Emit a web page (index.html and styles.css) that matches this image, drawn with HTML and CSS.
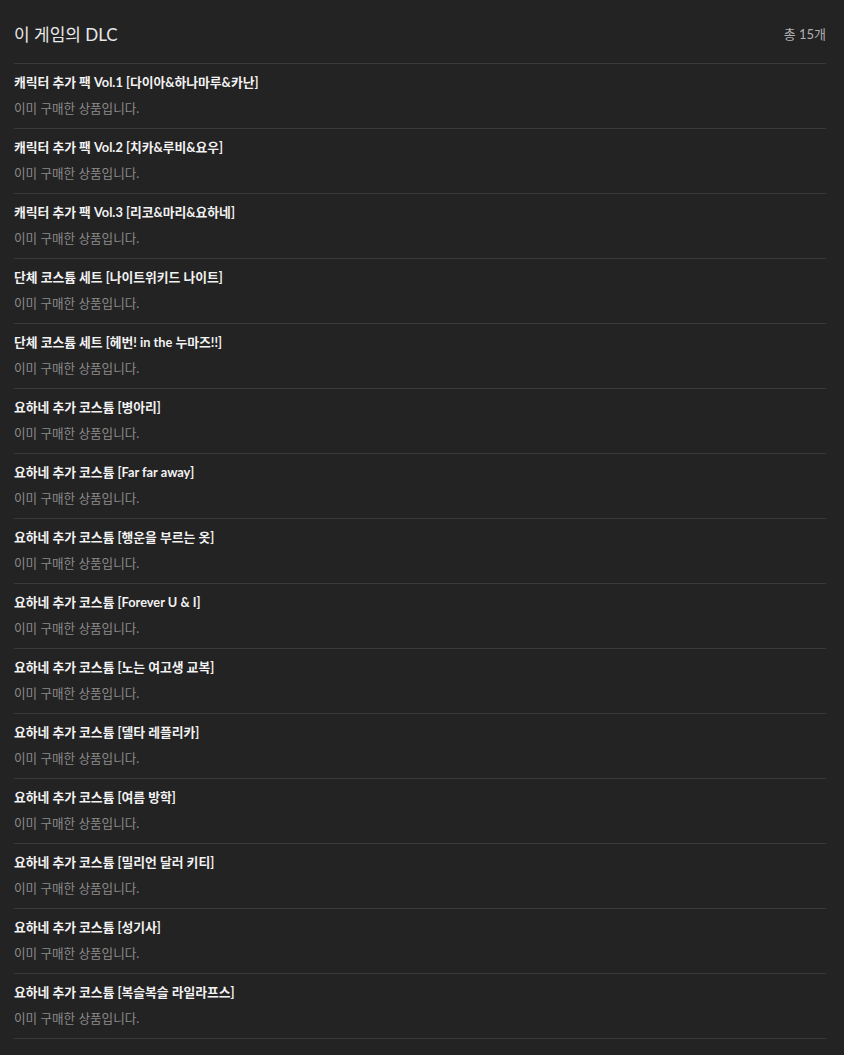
FILE: index.html
```html
<!DOCTYPE html>
<html lang="ko">
<head>
    <meta charset="UTF-8">
    <meta name="viewport" content="width=device-width, initial-scale=1.0">
    <title>이 게임의 DLC</title>
    <link rel="stylesheet" href="styles.css">
</head>
<body>
    <div class="dlc">
        <div class="dlc-header">
            <h2>이 게임의 DLC</h2>
            <span class="count">총 15개</span>
        </div>
        <ul class="dlc-list">
            <li><p class="name">캐릭터 추가 팩 Vol.1 [다이아&amp;하나마루&amp;카난]</p><p class="status">이미 구매한 상품입니다.</p></li>
            <li><p class="name">캐릭터 추가 팩 Vol.2 [치카&amp;루비&amp;요우]</p><p class="status">이미 구매한 상품입니다.</p></li>
            <li><p class="name">캐릭터 추가 팩 Vol.3 [리코&amp;마리&amp;요하네]</p><p class="status">이미 구매한 상품입니다.</p></li>
            <li><p class="name">단체 코스튬 세트 [나이트위키드 나이트]</p><p class="status">이미 구매한 상품입니다.</p></li>
            <li><p class="name">단체 코스튬 세트 [헤번! in the 누마즈!!]</p><p class="status">이미 구매한 상품입니다.</p></li>
            <li><p class="name">요하네 추가 코스튬 [병아리]</p><p class="status">이미 구매한 상품입니다.</p></li>
            <li><p class="name">요하네 추가 코스튬 [Far far away]</p><p class="status">이미 구매한 상품입니다.</p></li>
            <li><p class="name">요하네 추가 코스튬 [행운을 부르는 옷]</p><p class="status">이미 구매한 상품입니다.</p></li>
            <li><p class="name">요하네 추가 코스튬 [Forever U &amp; I]</p><p class="status">이미 구매한 상품입니다.</p></li>
            <li><p class="name">요하네 추가 코스튬 [노는 여고생 교복]</p><p class="status">이미 구매한 상품입니다.</p></li>
            <li><p class="name">요하네 추가 코스튬 [델타 레플리카]</p><p class="status">이미 구매한 상품입니다.</p></li>
            <li><p class="name">요하네 추가 코스튬 [여름 방학]</p><p class="status">이미 구매한 상품입니다.</p></li>
            <li><p class="name">요하네 추가 코스튬 [밀리언 달러 키티]</p><p class="status">이미 구매한 상품입니다.</p></li>
            <li><p class="name">요하네 추가 코스튬 [성기사]</p><p class="status">이미 구매한 상품입니다.</p></li>
            <li><p class="name">요하네 추가 코스튬 [복슬복슬 라일라프스]</p><p class="status">이미 구매한 상품입니다.</p></li>
        </ul>
    </div>
</body>
</html>
```

FILE: styles.css
```css
body {
    margin: 0;
    background-color: #232323;
    font-family: "Lato", "Noto Sans CJK KR", sans-serif;
}
.dlc {
    padding: 0 18px 0 14px;
}
.dlc-header {
    display: flex;
    justify-content: space-between;
    align-items: center;
    height: 64px;
    padding-top: 3px;
    box-sizing: border-box;
    border-bottom: 1px solid #3a3a3a;
}
.dlc-header h2 {
    margin: 0;
    font-size: 17px;
    font-weight: normal;
    color: #e8e8e8;
}
.count {
    font-size: 13px;
    color: #b0b0b0;
}
.dlc-list {
    list-style: none;
    margin: 0;
    padding: 0;
}
.dlc-list li {
    height: 65px;
    box-sizing: border-box;
    padding-top: 9px;
    border-bottom: 1px solid #3a3a3a;
}
.name {
    margin: 0;
    font-size: 12.8px;
    line-height: 18px;
    font-weight: bold;
    color: #f2f2f2;
}
.status {
    margin: 9px 0 0;
    font-size: 12.6px;
    line-height: 18px;
    color: #8a8a8a;
}
```
